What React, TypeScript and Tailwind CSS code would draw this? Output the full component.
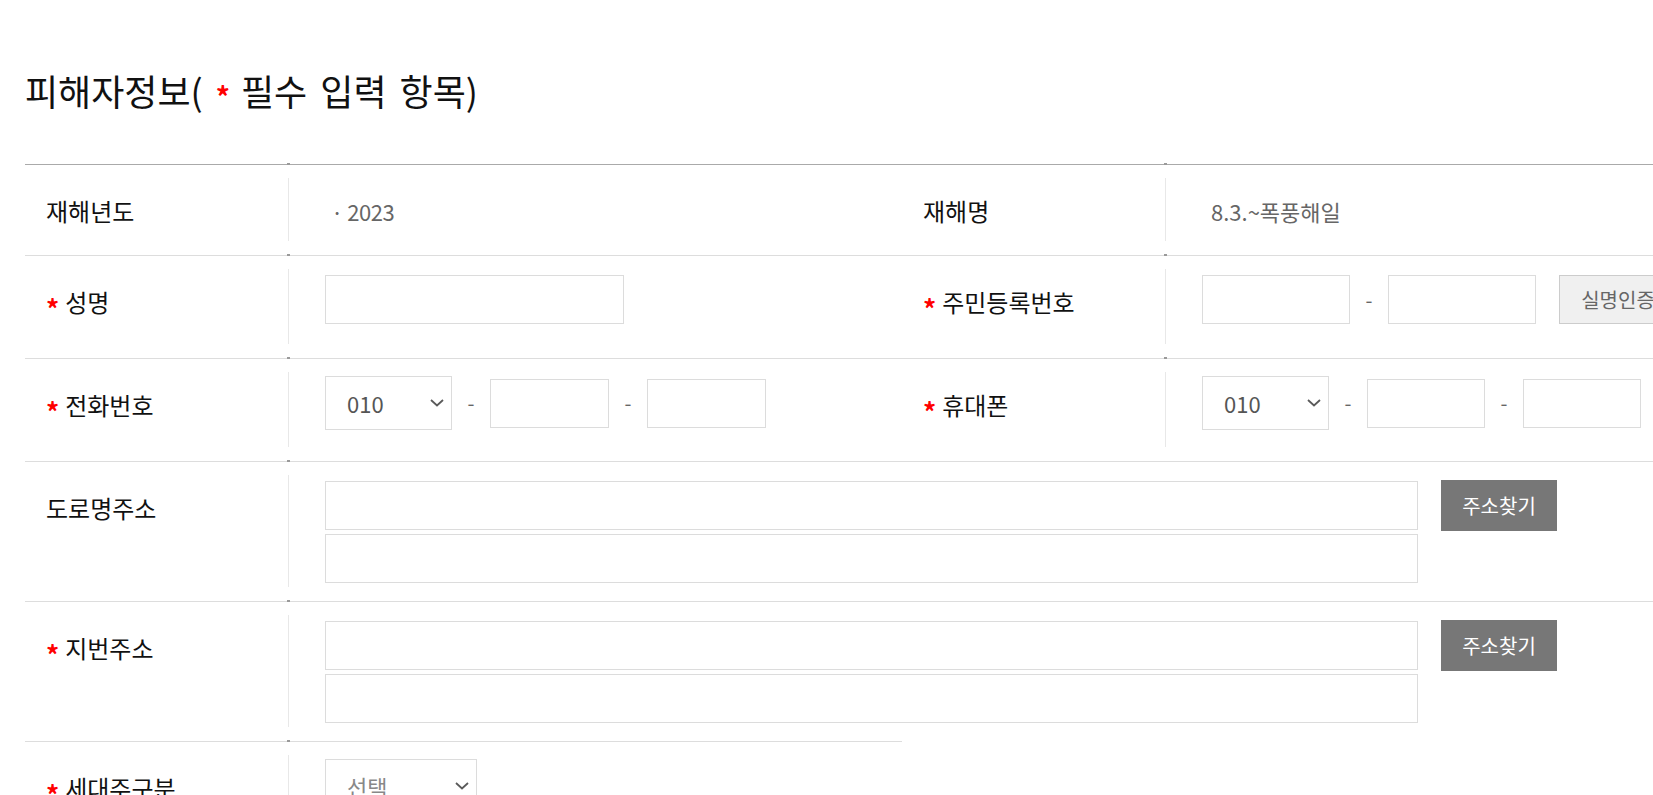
import { ReactNode } from 'react';

const Req = () => <span className="text-[#ff0000] text-[26px] font-bold leading-none mr-[6px] mt-[11px]">*</span>;

const Label = ({ text, req }: { text: string; req?: boolean }) => (
  <div className="w-[263px] shrink-0 pl-[21px] pt-[18px]">
    <div className="flex items-center h-[30px] text-[24px] leading-[30px] text-[#111]">
      {req && <Req />}
      <span>{text}</span>
    </div>
  </div>
);

const Tick = ({ left }: { left: string }) => (
  <span className={`absolute -top-[2px] ${left} w-[3px] h-[2px] bg-[#9a9a9a]`} />
);

const Field = ({ w }: { w: string }) => <div className={`${w} h-[49px] border border-[#dcdcdc] bg-white shrink-0`} />;

const Dash = () => <span className="w-[38px] text-center text-[20px] text-[#666] shrink-0">-</span>;

const Chevron = () => (
  <svg width="14" height="8" viewBox="0 0 14 8" fill="none">
    <path d="M1 1l6 5.5L13 1" stroke="#5a5a5a" strokeWidth="1.8" />
  </svg>
);

const Select = ({ value, w, light }: { value: string; w: string; light?: boolean }) => (
  <div className={`${w} h-[54px] shrink-0 border border-[#dcdcdc] bg-white flex items-center justify-between pl-[21px] pr-[7px]`}>
    <span className={`text-[22px] ${light ? 'text-[#888]' : 'text-[#555]'}`}>{value}</span>
    <Chevron />
  </div>
);

const Half = ({ children, wide }: { children: ReactNode; wide?: boolean }) => (
  <div className={`flex ${wide ? 'w-[1754px]' : 'w-[877px]'} pt-[13px] pb-[14px]`}>{children}</div>
);

const Value = ({ children, className = '' }: { children: ReactNode; className?: string }) => (
  <div className={`flex-1 border-l border-[#e8e8e8] ${className}`}>{children}</div>
);

const Row = ({ children, first, half, split }: { children: ReactNode; first?: boolean; half?: boolean; split?: boolean }) => (
  <div className={`relative flex ${half ? 'w-[877px]' : 'w-[1754px]'} ${first ? '' : 'border-t border-[#dddddd]'}`}>
    <Tick left="left-[262px]" />
    {split && <Tick left="left-[1139px]" />}
    {children}
  </div>
);

const Address = ({ label, req }: { label: string; req?: boolean }) => (
  <Row>
    <Half wide>
      <Label text={label} req={req} />
      <Value className="pl-[36px] pt-[6px] pb-[4px] flex gap-[23px]">
        <div className="flex flex-col gap-[4px]">
          <Field w="w-[1093px]" />
          <Field w="w-[1093px]" />
        </div>
        <button className="w-[116px] h-[51px] -mt-[1px] bg-[#777777] text-white text-[20px]">주소찾기</button>
      </Value>
    </Half>
  </Row>
);

export default function App() {
  return (
    <div className="w-full h-[795px] overflow-hidden bg-white font-['Noto_Sans_CJK_KR','Noto_Sans',sans-serif]">
      <div className="pl-[25px] w-[1800px]">
        <h2 className="pt-[70px] text-[36px] leading-[40px] text-[#111] font-normal flex items-center [word-spacing:5px]">
          <span>피해자정보(</span>
          <span className="text-[#ff0000] text-[28px] font-bold ml-[13px] mr-[11px] mt-[12px] leading-none">*</span>
          <span>필수 입력 항목)</span>
        </h2>

        <div className="mt-[54px] w-[1754px] border-t border-[#aaaaaa]">
          <Row first split>
            <Half>
              <Label text="재해년도" />
              <Value className="h-[63px] pl-[42px] pt-[18px]">
                <span className="text-[22px] leading-[30px] text-[#666] tracking-[-0.5px]">· 2023</span>
              </Value>
            </Half>
            <Half>
              <Label text="재해명" />
              <Value className="h-[63px] pl-[45px] pt-[18px]">
                <span className="text-[22px] leading-[30px] text-[#666]">8.3.~폭풍해일</span>
              </Value>
            </Half>
          </Row>

          <Row split>
            <Half>
              <Label text="성명" req />
              <Value className="pl-[36px] pt-[6px] pb-[20px]">
                <Field w="w-[299px]" />
              </Value>
            </Half>
            <Half>
              <Label text="주민등록번호" req />
              <Value className="pl-[36px] pt-[6px] pb-[20px] flex items-center">
                <Field w="w-[148px]" />
                <Dash />
                <Field w="w-[148px]" />
                <button className="ml-[23px] w-[118px] h-[49px] shrink-0 bg-[#f0f0f0] border border-[#cccccc] text-[20px] text-[#666]">
                  실명인증
                </button>
              </Value>
            </Half>
          </Row>

          <Row split>
            <Half>
              <Label text="전화번호" req />
              <Value className="pl-[36px] pt-[4px] pb-[17px] flex items-center">
                <Select value="010" w="w-[127px]" />
                <Dash />
                <Field w="w-[119px]" />
                <Dash />
                <Field w="w-[119px]" />
              </Value>
            </Half>
            <Half>
              <Label text="휴대폰" req />
              <Value className="pl-[36px] pt-[4px] pb-[17px] flex items-center">
                <Select value="010" w="w-[127px]" />
                <Dash />
                <Field w="w-[118px]" />
                <Dash />
                <Field w="w-[118px]" />
              </Value>
            </Half>
          </Row>

          <Address label="도로명주소" />
          <Address label="지번주소" req />

          <Row half>
            <Half>
              <Label text="세대주구분" req />
              <Value className="pl-[36px] pt-[4px] pb-[17px]">
                <Select value="선택" w="w-[152px]" light />
              </Value>
            </Half>
          </Row>
        </div>
      </div>
    </div>
  );
}
